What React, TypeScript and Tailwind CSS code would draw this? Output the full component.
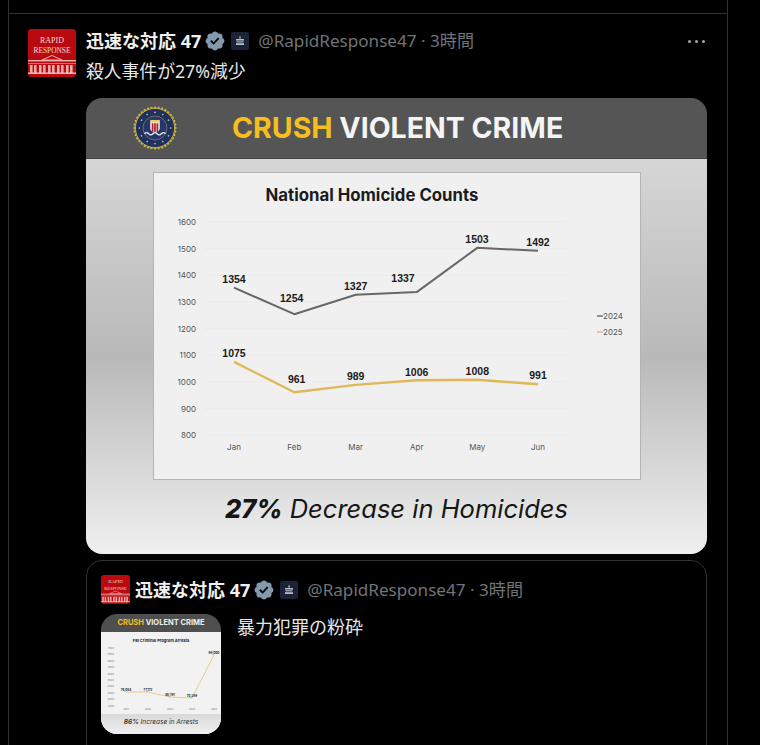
import React from 'react';

const months = ['Jan', 'Feb', 'Mar', 'Apr', 'May', 'Jun'];
const xs = [80, 140.3, 201.7, 262.7, 323.3, 384];
const ticks = [1600, 1500, 1400, 1300, 1200, 1100, 1000, 900, 800];
const counts2024 = [1354, 1254, 1327, 1337, 1503, 1492];
const counts2025 = [1075, 961, 989, 1006, 1008, 991];

// label nudges so the numbers sit where they do in the picture
const labels2024 = [[80, -4.6], [137.7, -12.7], [201.7, -4.8], [249, -10], [323, -5], [384, -4.8]];
const labels2025 = [[80, -4.6], [142.7, -9.3], [201.7, -5], [262.7, -4.8], [323.3, -5], [384, -4.8]];

const yOf = (v: number) => 7 + (1600 - v) * 0.2665;
const pts = (vals: number[]) => vals.map((v, i) => `${xs[i]},${yOf(v)}`).join(' ');

const VERIFIED =
  'M22.25 12c0-1.43-.88-2.67-2.19-3.34.46-1.39.2-2.9-.81-3.91s-2.52-1.27-3.91-.81c-.66-1.31-1.91-2.19-3.34-2.19s-2.67.88-3.33 2.19c-1.4-.46-2.91-.2-3.92.81s-1.26 2.52-.8 3.91c-1.31.67-2.2 1.91-2.2 3.34s.89 2.67 2.2 3.34c-.46 1.39-.21 2.9.8 3.91s2.52 1.26 3.91.81c.67 1.31 1.91 2.19 3.34 2.19s2.68-.88 3.34-2.19c1.39.45 2.9.2 3.91-.81s1.27-2.52.81-3.91c1.31-.67 2.19-1.91 2.19-3.34zm-11.71 4.2L6.8 12.46l1.41-1.42 2.26 2.26 4.8-5.23 1.47 1.36-6.2 6.77z';

function Avatar({ size }: { size: number }) {
  return (
    <svg width={size} height={size} viewBox="0 0 48 48" className="shrink-0 rounded-[3px]">
      <rect width="48" height="48" fill="#b90b0f" />
      <text x="24" y="14" textAnchor="middle" fontSize="8" fill="#f4d9d9" fontFamily="Liberation Serif, serif" textLength="24" lengthAdjust="spacingAndGlyphs">RAPID</text>
      <text x="24" y="24" textAnchor="middle" fontSize="8" fill="#f4d9d9" fontFamily="Liberation Serif, serif" textLength="37" lengthAdjust="spacingAndGlyphs">RESPONSE</text>
      <path d="M14 31 L24 26.5 L34 31 Z" fill="none" stroke="#f3b9b9" strokeWidth="0.9" />
      <rect x="0" y="31" width="48" height="1.4" fill="#f0b4b4" />
      <rect x="0" y="34" width="48" height="1" fill="#d96b6b" />
      {[2, 6, 11, 15, 20, 24, 29, 33, 38, 42].map((x) => (
        <rect key={x} x={x} y="36" width="2.6" height="9" fill="#eea9a9" />
      ))}
      <rect x="0" y="43.5" width="48" height="1.4" fill="#f3c2c2" />
    </svg>
  );
}

function Affiliate() {
  return (
    <div className="flex h-[18px] w-[18px] shrink-0 items-center justify-center rounded-[2px] bg-[#1c2238]">
      <svg width="10" height="10" viewBox="0 0 10 10">
        <rect x="4" y="0.5" width="2" height="2" fill="#8f94a6" />
        <rect x="1" y="3" width="8" height="1.5" fill="#b9bcc8" />
        <rect x="1.5" y="5" width="7" height="1.5" fill="#8f94a6" />
        <rect x="1" y="7.2" width="8" height="1.8" fill="#b9bcc8" />
      </svg>
    </div>
  );
}

function Author({ avatar }: { avatar?: boolean }) {
  return (
    <div className="flex items-center leading-[24px] whitespace-nowrap">
      {avatar && (
        <div className="mr-[5px]">
          <Avatar size={29} />
        </div>
      )}
      <span className="text-[18px] font-bold text-[#f1f1f1]">迅速な対応 47</span>
      <svg width="22" height="22" viewBox="0 0 24 24" className="ml-[3px] shrink-0" fill="#829aab">
        <path d={VERIFIED} />
      </svg>
      <div className="ml-[5px]">
        <Affiliate />
      </div>
      <span className="ml-[9px] text-[17.1px] text-[#6f7478]">@RapidResponse47 · 3時間</span>
    </div>
  );
}

function FbiSeal() {
  const dots = Array.from({ length: 36 }, (_, i) => (i * Math.PI * 2) / 36);
  const stars = Array.from({ length: 12 }, (_, i) => (i * Math.PI * 2) / 12);
  return (
    <svg width="44" height="44" viewBox="-23 -23 46 46" className="shrink-0">
      {dots.map((a) => (
        <circle key={a} cx={21.3 * Math.cos(a)} cy={21.3 * Math.sin(a)} r="1.3" fill="#cdb23c" />
      ))}
      <circle r="20.5" fill="#20305f" stroke="#c8ae3e" strokeWidth="1" />
      <circle r="12.5" fill="#24366d" stroke="#8a8f6a" strokeWidth="0.7" />
      {stars.map((a) => (
        <circle key={a} cx={16.3 * Math.cos(a)} cy={16.3 * Math.sin(a)} r="0.9" fill="#b9b9a0" />
      ))}
      <path d="M-5 -7 H5 V0 Q5 4 0 5 Q-5 4 -5 0 Z" fill="#f2f2f2" />
      <rect x="-3.4" y="-5" width="1.8" height="9" fill="#b51f2b" />
      <rect x="-0.9" y="-5" width="1.8" height="9.8" fill="#b51f2b" />
      <rect x="1.6" y="-5" width="1.8" height="9" fill="#b51f2b" />
      <rect x="-5" y="-8.4" width="10" height="2.6" fill="#e9d16a" />
      <path d="M-11 6 q2.2 -2.4 4.4 0 t4.4 0 t4.4 0 t4.4 0 t4.4 0" fill="none" stroke="#f0f0f0" strokeWidth="1.3" />
    </svg>
  );
}

function HomicideChart() {
  return (
    <svg width="486" height="250" viewBox="0 0 486 250" className="block" fontFamily="Inter, sans-serif">
      {ticks.map((t) => (
        <g key={t}>
          <text x="42" y={yOf(t) + 3} textAnchor="end" fontSize="8" fill="#555">{t}</text>
          <line x1="51" x2="413" y1={yOf(t)} y2={yOf(t)} stroke="#ebebeb" strokeWidth="1" />
        </g>
      ))}
      <polyline points={pts(counts2024)} fill="none" stroke="#676767" strokeWidth="2" strokeLinejoin="round" />
      <polyline points={pts(counts2025)} fill="none" stroke="#dfb957" strokeWidth="2.4" strokeLinejoin="round" />
      {counts2024.map((v, i) => (
        <text key={v} x={labels2024[i][0]} y={yOf(v) + labels2024[i][1]} textAnchor="middle" fontSize="10.5" fontWeight="700" fill="#1a1a1a" fontFamily="Liberation Sans, sans-serif">{v}</text>
      ))}
      {counts2025.map((v, i) => (
        <text key={v} x={labels2025[i][0]} y={yOf(v) + labels2025[i][1]} textAnchor="middle" fontSize="10.5" fontWeight="700" fill="#1a1a1a" fontFamily="Liberation Sans, sans-serif">{v}</text>
      ))}
      {months.map((m, i) => (
        <text key={m} x={xs[i]} y="235" textAnchor="middle" fontSize="8" fill="#555">{m}</text>
      ))}
      <line x1="443" x2="449" y1="101" y2="101" stroke="#555" strokeWidth="1.2" />
      <text x="449" y="104" fontSize="8" fill="#555">2024</text>
      <line x1="443" x2="449" y1="117" y2="117" stroke="#dfb957" strokeWidth="1.2" />
      <text x="449" y="120" fontSize="8" fill="#555">2025</text>
    </svg>
  );
}

function ArrestChart() {
  const ax = [25, 47, 69, 91, 113];
  const ay = [49, 49, 54, 55, 12];
  const lab = ['76,084', '77,172', '66,791', '70,389', '99,000'];
  return (
    <svg width="120" height="71" viewBox="0 0 120 71" className="block" fontFamily="Inter, sans-serif">
      {Array.from({ length: 10 }, (_, i) => (
        <text key={i} x="13" y={6 + i * 6.4} textAnchor="end" fontSize="2.5" fill="#777">{7000 - i * 100}</text>
      ))}
      <polyline points={ax.map((x, i) => `${x},${ay[i]}`).join(' ')} fill="none" stroke="#e4c979" strokeWidth="0.9" />
      {ax.map((x, i) => (
        <text key={x} x={x} y={ay[i] - 1.5} textAnchor="middle" fontSize="3" fontWeight="700" fill="#222">{lab[i]}</text>
      ))}
      {ax.map((x, i) => (
        <text key={i} x={x} y="67" textAnchor="middle" fontSize="2.5" fill="#777">{2021 + i}</text>
      ))}
    </svg>
  );
}

export default function App() {
  return (
    <div className="h-[745px] overflow-hidden bg-black font-['Noto_Sans','Noto_Sans_CJK_JP',sans-serif]">
      <div className="ml-[8px] h-full w-[720px] border-x border-[#2f3336] pt-[13px]">
        <div className="border-t border-[#2f3336] pt-[15px] pl-[19px]">
          <div className="flex gap-[10px]">
            <Avatar size={48} />
            <div className="w-[621px]">
              <div className="flex h-[24px] items-center justify-between">
                <Author />
                <div className="mr-[2px] flex gap-[4px]">
                  <div className="h-[3px] w-[3px] rounded-full bg-[#a5a8ab]" />
                  <div className="h-[3px] w-[3px] rounded-full bg-[#a5a8ab]" />
                  <div className="h-[3px] w-[3px] rounded-full bg-[#a5a8ab]" />
                </div>
              </div>
              <p className="mt-[5px] text-[17.8px] leading-[26px] text-[#e7e7e7]">殺人事件が27%減少</p>

              {/* media card */}
              <div className="mt-[14px] h-[456px] overflow-hidden rounded-[16px] font-['Inter',sans-serif]">
                <div className="flex h-[61px] items-center border-b border-[#3f4347] bg-[#555555] pl-[47px]">
                  <FbiSeal />
                  <div className="ml-[55px] text-[28.5px] leading-none font-bold whitespace-nowrap">
                    <span className="text-[#f6be1e]">CRUSH</span>
                    <span className="text-[#f4f4f4]"> VIOLENT CRIME</span>
                  </div>
                </div>
                <div className="flex h-[395px] flex-col items-center bg-gradient-to-b from-[#d6d6d6] via-[#b9b9b9] to-[#f0f0f0] pt-[13px]">
                  <div className="h-[308px] w-[488px] border border-[#b4b4b4] bg-[#f0f0f0]">
                    <div className="pt-[13px] pb-[11px] pl-[112px] text-[16.8px] leading-[18px] font-bold whitespace-nowrap text-[#1b1b1b]">National Homicide Counts</div>
                    <HomicideChart />
                  </div>
                  <div className="mt-[13px] text-[25.5px] leading-[32px] whitespace-nowrap text-[#161616] italic">
                    <span className="font-extrabold">27%</span> Decrease in Homicides
                  </div>
                </div>
              </div>

              {/* quoted post */}
              <div className="mt-[6px] h-[200px] rounded-[16px] border border-[#2f3336] pt-[14px] pl-[14px]">
                <Author avatar />
                <div className="mt-[10px] flex">
                  <div className="h-[120px] w-[120px] shrink-0 overflow-hidden rounded-[16px] font-['Inter',sans-serif]">
                    <div className="flex h-[18px] items-center justify-center bg-[#4f4f4f] text-[7.5px] font-bold whitespace-nowrap">
                      <span className="text-[#f6be1e]">CRUSH</span>
                      <span className="text-[#eeeeee]">&nbsp;VIOLENT CRIME</span>
                    </div>
                    <div className="h-[102px] bg-[#f2f2f2]">
                      <div className="pt-[6px] text-center text-[4px] leading-[5px] font-bold text-[#222]">FBI Criminal Program Arrests</div>
                      <ArrestChart />
                      <div className="h-[20px] bg-gradient-to-b from-[#d9d9d9] to-[#f0f0f0] text-center text-[6.5px] leading-[17px] text-[#333] italic">
                        <span className="font-bold">86%</span> Increase in Arrests
                      </div>
                    </div>
                  </div>
                  <p className="ml-[16px] text-[18px] leading-[26px] text-[#e7e7e7]">暴力犯罪の粉砕</p>
                </div>
              </div>
            </div>
          </div>
        </div>
      </div>
    </div>
  );
}
